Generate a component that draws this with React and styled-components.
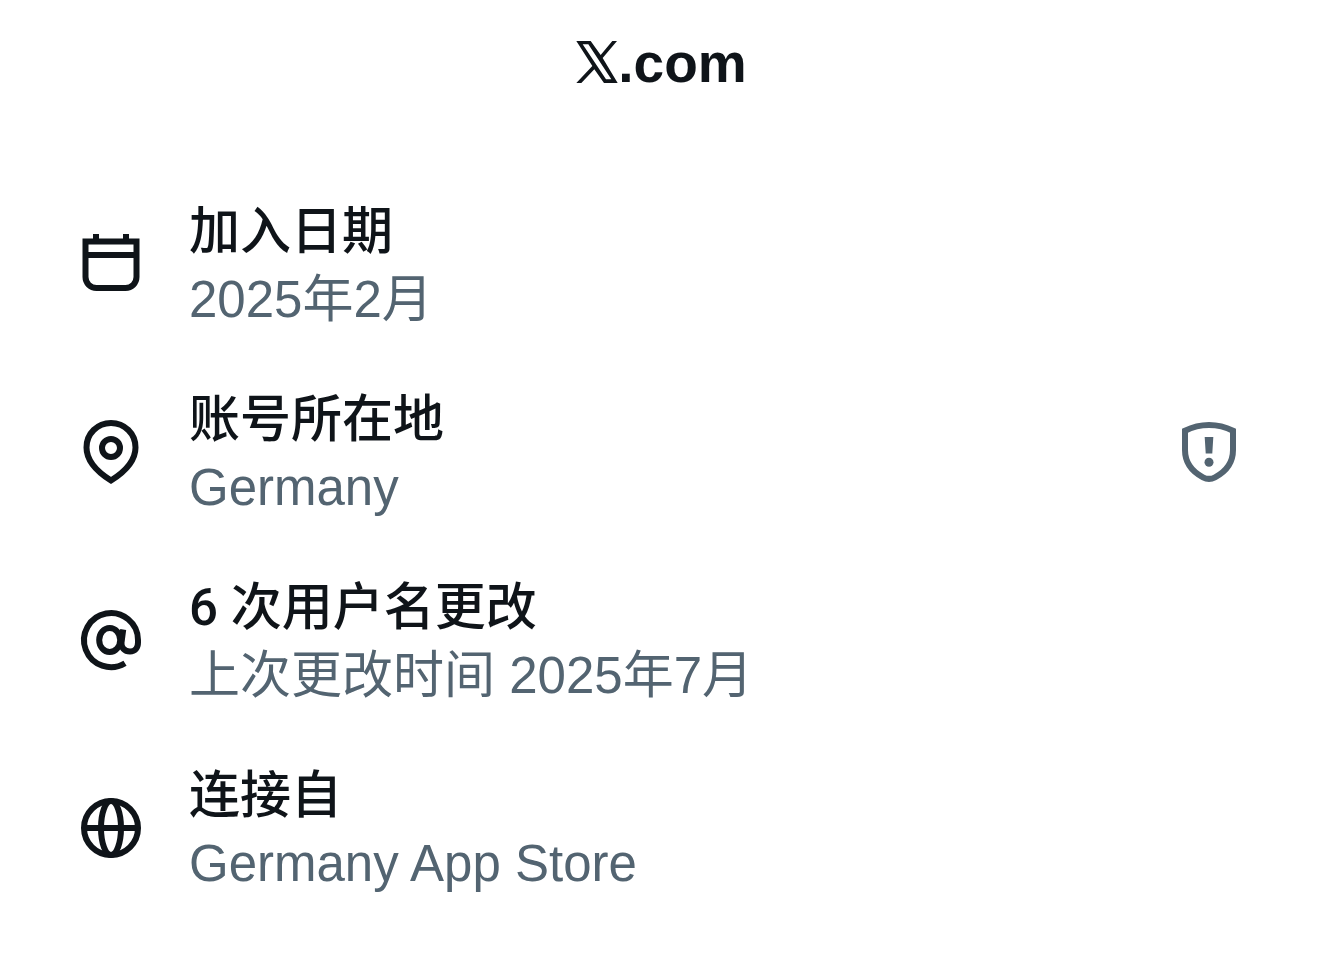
import React from "react";
import styled, { createGlobalStyle } from "styled-components";

const INK = "#0f1419";
const MUTED = "#536471";

export default function App() {
  return (
    <>
      <GlobalStyle />
      <Page>
        <Header>
          <XMark />
          <Domain>.com</Domain>
        </Header>
        <List>
          <Row icon={<CalendarIcon />} title="加入日期" detail="2025年2月" />
          <Row
            icon={<PinIcon />}
            title="账号所在地"
            detail="Germany"
            action={
              <IconButton type="button" aria-label="账号所在地">
                <ShieldIcon />
              </IconButton>
            }
          />
          <Row
            icon={<AtIcon />}
            title="6 次用户名更改"
            detail="上次更改时间 2025年7月"
          />
          <Row icon={<GlobeIcon />} title="连接自" detail="Germany App Store" />
        </List>
      </Page>
    </>
  );
}

function Row({ icon, title, detail, action }) {
  return (
    <Item>
      {icon}
      <Text>
        <Title>{title}</Title>
        <Detail>{detail}</Detail>
      </Text>
      {action}
    </Item>
  );
}

function XMark() {
  return (
    <Logo viewBox="0 0 124 126" aria-hidden="true">
      <path
        fillRule="evenodd"
        d="M0 0H43L73 42L108 0H122L79 51L124 126H83L54 85L15 126H0L48 75ZM19 10L89 115H105L36 10Z"
      />
    </Logo>
  );
}

function CalendarIcon() {
  return (
    <Icon viewBox="0 0 72 72" aria-hidden="true">
      <path d="M10.5 13.5H61.5V49A11 11 0 0 1 50.5 60H21.5A11 11 0 0 1 10.5 49ZM10.5 27H61.5M21 6V13M51 6V13" />
    </Icon>
  );
}

function PinIcon() {
  return (
    <Icon viewBox="0 0 72 72" aria-hidden="true">
      <path d="M36 64.5C24 57 11.500 46 11.500 31.500C11.500 17.500 22.500 7 36 7S60.500 17.500 60.500 31.500C60.500 46 48 57 36 64.500Z" />
      <circle cx="36" cy="32" r="9" />
    </Icon>
  );
}

function AtIcon() {
  return (
    <Icon viewBox="0 0 72 72" aria-hidden="true">
      <path d="M50 59.2A27 27 0 1 1 63 36V38.5C63 44 60 47.5 55 47.5C49.5 47.5 46 43.5 46.5 38.5L48.2 25.5" />
      <ellipse cx="34.7" cy="36" rx="10.5" ry="12" />
    </Icon>
  );
}

function GlobeIcon() {
  return (
    <Icon viewBox="0 0 72 72" aria-hidden="true">
      <circle cx="36" cy="36" r="27" />
      <ellipse cx="36" cy="36" rx="10" ry="27" />
      <path d="M9 36H63" />
    </Icon>
  );
}

function ShieldIcon() {
  return (
    <Icon viewBox="0 0 72 72" aria-hidden="true">
      <path d="M12 14.7C20 10.7 28 9 36 9S52 10.7 60 14.7V34C60 47 53 55.5 42 61.3Q36 64.5 30 61.3C19 55.5 12 47 12 34Z" />
      <path fill="currentColor" stroke="none" d="M31.7 21H40.3L39.3 37.5H32.7Z" />
      <circle fill="currentColor" stroke="none" cx="36" cy="46.3" r="4.5" />
    </Icon>
  );
}

const GlobalStyle = createGlobalStyle`
  body {
    margin: 0;
    background: #fff;
    color: ${INK};
    font-family: "Liberation Sans", "Noto Sans CJK SC", sans-serif;
  }
`;
const Page = styled.main`
  padding: 32px 75px;
`;
const Header = styled.header`
  display: flex;
  justify-content: center;
  align-items: center;
  height: 60px;
  padding-left: 3px;
`;
const Logo = styled.svg`
  width: 42px;
  height: 42px;
  fill: ${INK};
`;
const Domain = styled.h1`
  margin: 0;
  padding-top: 2px;
  font-size: 55px;
  line-height: 60px;
  font-weight: 700;
`;
const List = styled.ul`
  display: flex;
  flex-direction: column;
  gap: 48px;
  margin: 102px 0 0;
  padding: 0;
  list-style: none;
`;
const Item = styled.li`
  display: flex;
  align-items: center;
`;
const Icon = styled.svg`
  display: block;
  flex: none;
  width: 72px;
  height: 72px;
  fill: none;
  stroke: currentColor;
  stroke-width: 6;
`;
const Text = styled.div`
  flex: 1;
  margin-left: 42px;
  padding-top: 4px;
`;
const Title = styled.h2`
  margin: 0;
  font-family: Roboto, "Noto Sans CJK SC", sans-serif;
  font-size: 51px;
  line-height: 68px;
  font-weight: 500;
`;
const Detail = styled.p`
  margin: 0;
  color: ${MUTED};
  font-size: 51px;
  line-height: 68px;
`;
const IconButton = styled.button`
  padding: 0;
  border: 0;
  background: none;
  color: ${MUTED};
  cursor: pointer;
`;
